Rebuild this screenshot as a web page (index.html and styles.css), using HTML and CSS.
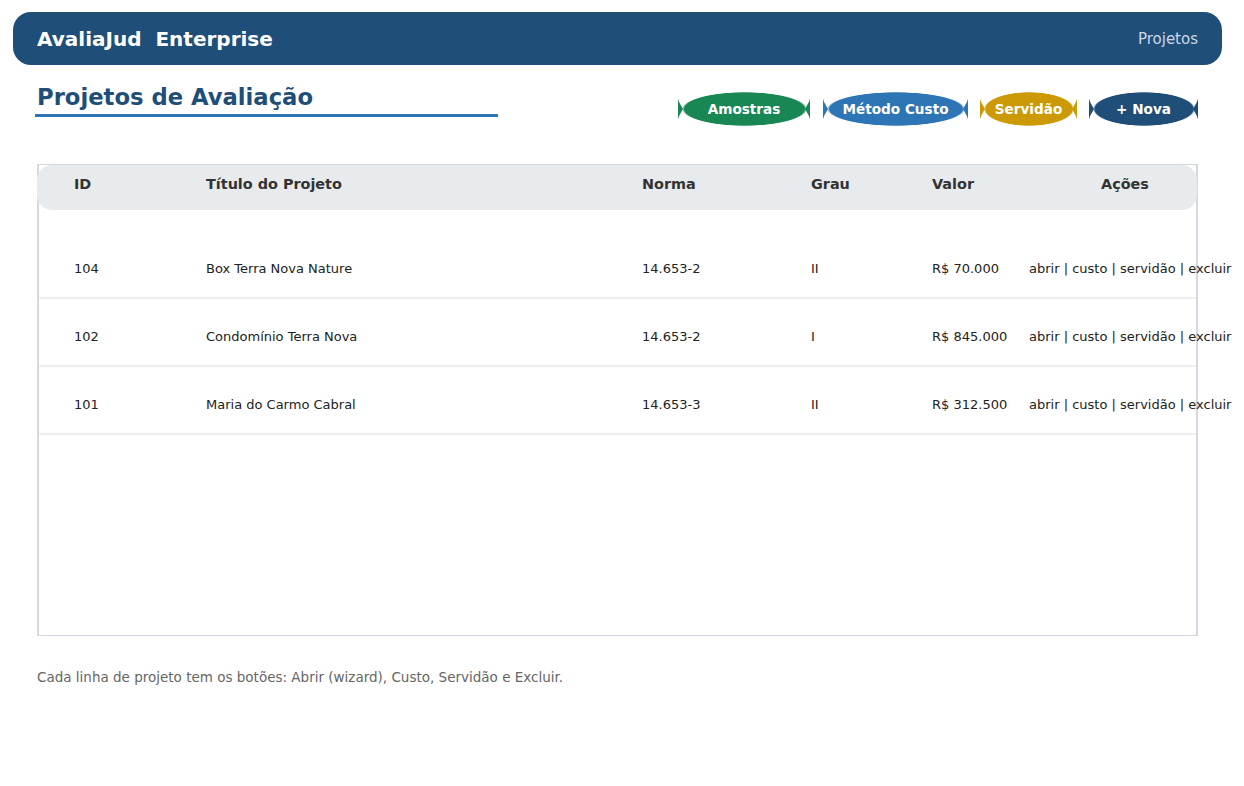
FILE: index.html
```html
<!DOCTYPE html>
<html lang="pt-BR">
<head>
<meta charset="utf-8">
<title>AvaliaJud Enterprise</title>
<link rel="stylesheet" href="styles.css">
</head>
<body>
<div class="page">
  <header class="topbar">
    <span class="brand">AvaliaJud&nbsp; Enterprise</span>
    <nav class="nav">Projetos</nav>
  </header>

  <section class="titlebar">
    <h1 class="title">Projetos de Avaliação</h1>
    <div class="actions">
      <button class="pill pill-green pill-w1">Amostras</button>
      <button class="pill pill-blue pill-w2">Método Custo</button>
      <button class="pill pill-gold pill-w3">Servidão</button>
      <button class="pill pill-navy pill-w4">+ Nova</button>
    </div>
  </section>

  <div class="table">
    <div class="row head">
      <span>ID</span>
      <span>Título do Projeto</span>
      <span>Norma</span>
      <span>Grau</span>
      <span>Valor</span>
      <span class="head-actions">Ações</span>
    </div>
    <div class="body">
      <div class="row item">
        <span>104</span>
        <span>Box Terra Nova Nature</span>
        <span>14.653-2</span>
        <span>II</span>
        <span>R$ 70.000</span>
        <span class="links">abrir | custo | servidão | excluir</span>
      </div>
      <div class="row item">
        <span>102</span>
        <span>Condomínio Terra Nova</span>
        <span>14.653-2</span>
        <span>I</span>
        <span>R$ 845.000</span>
        <span class="links">abrir | custo | servidão | excluir</span>
      </div>
      <div class="row item">
        <span>101</span>
        <span>Maria do Carmo Cabral</span>
        <span>14.653-3</span>
        <span>II</span>
        <span>R$ 312.500</span>
        <span class="links">abrir | custo | servidão | excluir</span>
      </div>
    </div>
  </div>

  <p class="note">Cada linha de projeto tem os botões: Abrir (wizard), Custo, Servidão e Excluir.</p>
</div>
</body>
</html>
```
FILE: styles.css
```css
* { box-sizing: border-box; }
html, body { margin: 0; padding: 0; background: #fff; }
body { font-family: "DejaVu Sans", sans-serif; color: #222; }

.page { padding: 12px 22px 0 13px; }

.topbar {
  height: 53px;
  background: #1f4e79;
  border-radius: 18px;
  display: flex;
  align-items: center;
  justify-content: space-between;
  padding: 0 24px;
}
.brand { color: #fff; font-weight: bold; font-size: 20px; }
.nav { color: #c9d7e6; font-size: 15px; }

.titlebar {
  display: flex;
  justify-content: space-between;
  align-items: flex-start;
  padding: 0 24px 0 22px;
  margin-top: 17px;
}
.title {
  margin: 0;
  width: 463px;
  font-size: 22.7px;
  line-height: 30px;
  font-weight: bold;
  color: #1f4e79;
  padding-left: 2px;
  padding-bottom: 2px;
  border-bottom: 3px solid #2e75b6;
}
.actions { display: flex; gap: 12px; margin-top: 10px; }
.pill {
  position: relative;
  height: 34px;
  border: none;
  padding: 0;
  font-family: "DejaVu Sans", sans-serif;
  font-size: 13.6px;
  font-weight: bold;
  color: #fff;
  background-color: transparent;
  background-image: radial-gradient(closest-side, var(--c) 96%, transparent 100%);
  background-size: calc(100% - 7px) 100%;
  background-position: center;
  background-repeat: no-repeat;
}
.pill::before, .pill::after {
  content: "";
  position: absolute;
  top: 0;
  width: 5px;
  height: 100%;
  background: var(--c);
}
.pill::before { left: 0; clip-path: polygon(0 20%, 1.2px 30%, 5px 50%, 1.2px 70%, 0 80%); }
.pill::after { right: 0; clip-path: polygon(5px 20%, 3.8px 30%, 0 50%, 3.8px 70%, 5px 80%); }
.pill-green { --c: #198754; }
.pill-blue { --c: #2e75b6; }
.pill-gold { --c: #cc9a06; }
.pill-navy { --c: #1f4e79; }
.pill-w1 { width: 132px; margin-right: 1px; }
.pill-w2 { width: 145px; }
.pill-w3 { width: 97px; }
.pill-w4 { width: 109px; }

.table {
  margin: 38px 24px 0 24px;
  height: 472px;
  border: 1px solid #d3d9df;
  border-left-width: 2px;
  border-right-width: 2px;
}
.row {
  display: grid;
  grid-template-columns: 132px 436px 169px 121px 97px 1fr;
  padding-left: 35px;
  white-space: nowrap;
}
.head {
  height: 45px;
  margin-left: -2px;
  margin-right: -1px;
  padding-left: 37px;
  background: #e8ebee;
  border-radius: 15px;
  font-weight: bold;
  font-size: 14.4px;
  color: #333;
  padding-top: 11px;
}
.head-actions { padding-left: 72px; }
.body { margin-top: 21px; }
.item {
  height: 68px;
  padding-top: 30px;
  font-size: 13px;
  line-height: 16px;
  color: #222;
  border-bottom: 2px solid #eceeef;
}
.links { font-size: 13px; color: #222; }

.note {
  margin: 33px 0 0 24px;
  font-size: 13.5px;
  color: #666;
}
```
